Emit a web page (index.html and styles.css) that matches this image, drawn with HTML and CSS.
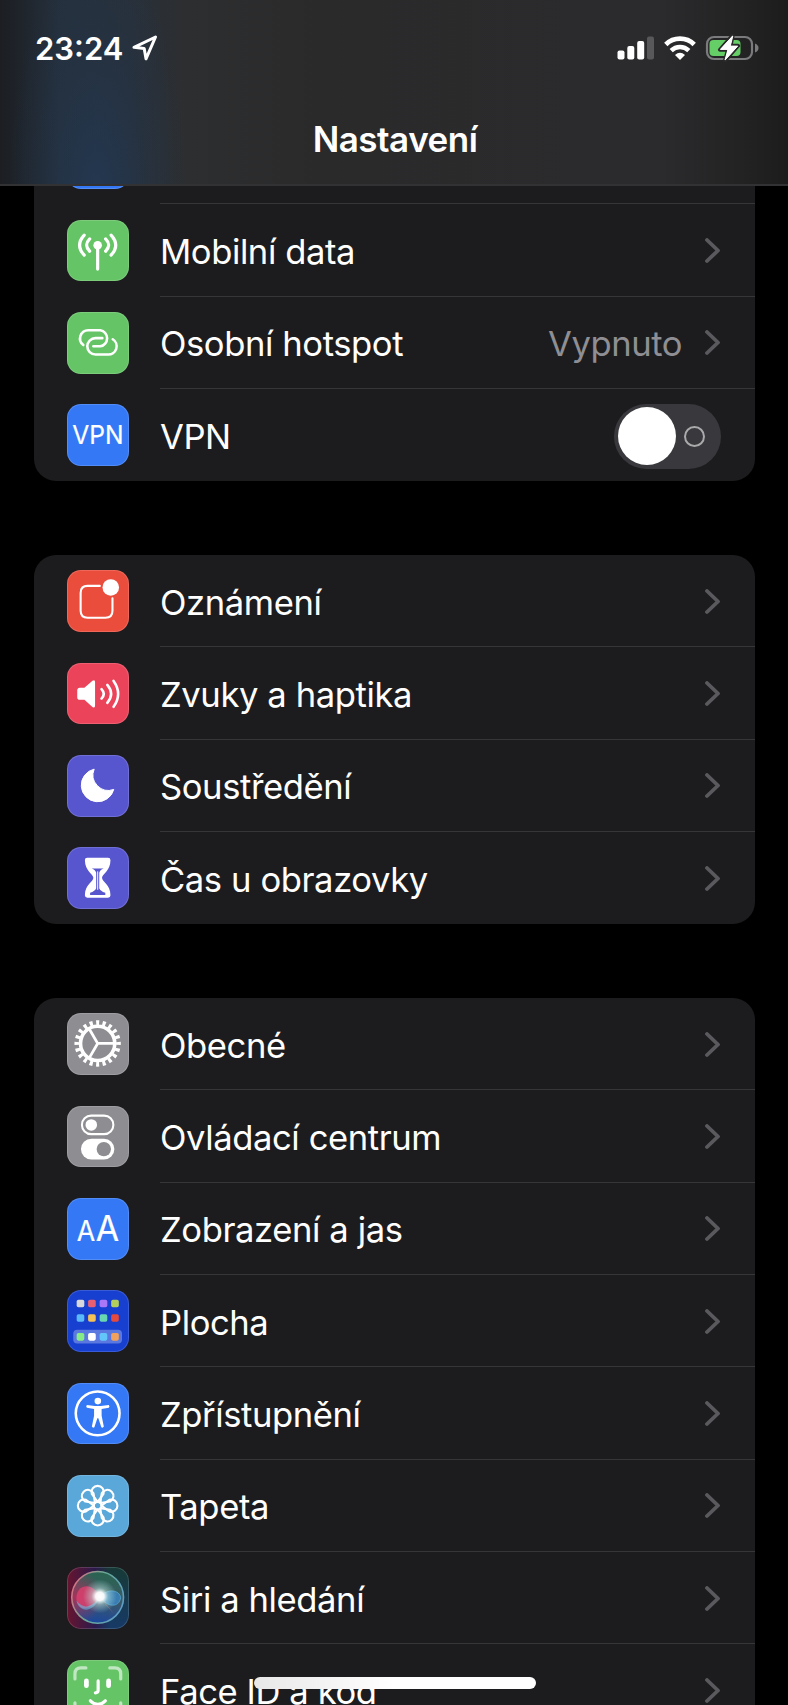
FILE: index.html
```
<!DOCTYPE html>
<html lang="cs">
<head>
    <meta charset="UTF-8">
    <meta name="viewport" content="width=device-width, initial-scale=1.0">
    <title>Nastavení</title>
    <link rel="stylesheet" href="styles.css">
</head>
<body>
    <svg width="0" height="0" class="defs">
        <symbol id="chevron" viewBox="0 0 16 26"><path d="M2 2 13 12.5 2 23" fill="none" stroke="currentColor" stroke-width="3.8" stroke-linecap="round" stroke-linejoin="round"/></symbol>
    </svg>

    <header class="header">
        <div class="status-bar">
            <span class="time">23:24</span>
            <svg class="location" width="26" height="26" viewBox="0 0 26 26"><path d="M2 12.3 23.5 2 14 23.8 12.2 13.6Z" fill="none" stroke="#fff" stroke-width="3" stroke-linejoin="round"/></svg>
            <svg class="signal" width="38" height="24" viewBox="0 0 38 24" fill="#fff">
                <rect x="0.5" y="14.5" width="7" height="9" rx="2"/>
                <rect x="10.3" y="10" width="7" height="13.5" rx="2"/>
                <rect x="20.2" y="5" width="7" height="18.5" rx="2"/>
                <rect x="30" y="0.5" width="7" height="23" rx="2" fill="#58585a"/>
            </svg>
            <svg class="wifi" width="32" height="24" viewBox="0 0 32 24" fill="none" stroke="#fff">
                <path d="M1.8 8.5A20.3 20.3 0 0 1 30.2 8.5" stroke-width="4.8"/>
                <path d="M7.2 14.6A12.5 12.5 0 0 1 24.8 14.6" stroke-width="4.4"/>
                <path d="M16 24 11 18.9Q16 14.7 21 18.9Z" fill="#fff" stroke="none"/>
            </svg>
            <svg class="battery" width="54" height="28" viewBox="0 0 54 28">
                <rect x="2" y="3" width="45" height="22" rx="7" fill="none" stroke="#7b7b7d" stroke-width="2.2"/>
                <path d="M50 9.5Q53.5 11 53.5 14T50 18.5Z" fill="#7b7b7d"/>
                <rect x="4.5" y="6" width="31" height="16" rx="4" fill="#66ce67"/>
                <path d="M27.8 1.2 15 15.8H23L20 26.6 33 11.8H25.5Z" fill="#fff" stroke="#29292a" stroke-width="4" stroke-linejoin="round" paint-order="stroke"/>
                <path d="M27.8 2 15.5 15.3H23L20 26 32.5 12.3H25.2Z" fill="#fff" stroke="#fff" stroke-width="1" stroke-linejoin="round"/>
            </svg>
        </div>
        <h1>Nastavení</h1>
    </header>

    <main class="settings">
        <section class="group">
            <div class="row">
                <span class="icon blue"></span>
                <div class="content"></div>
            </div>
            <div class="row">
                <svg class="icon green" viewBox="0 0 62 62">
                    <circle cx="30.8" cy="25.3" r="4.3" fill="#fff"/>
                    <g class="line w3"><path d="M30.8 26V49.3M22.8 19Q16.6 25.3 22.8 31.4M38.8 19Q45 25.3 38.8 31.4M17.3 15.2Q8 25.3 17.3 35.3M44.3 15.2Q53.6 25.3 44.3 35.3"/></g>
                </svg>
                <div class="content"><span class="label">Mobilní data</span><svg class="chevron"><use href="#chevron"/></svg></div>
            </div>
            <div class="row">
                <svg class="icon green" viewBox="0 0 62 62">
                    <g class="line w25"><path d="M16.4 33.2A8.3 8.3 0 0 1 21.3 18.3H33.4A8.2 8.2 0 0 1 33.4 34.5H26.5M46 27.4A8.3 8.3 0 0 1 41 42.7H28.6A8.2 8.2 0 0 1 28.6 26.3H35.5"/></g>
                </svg>
                <div class="content"><span class="label">Osobní hotspot</span><span class="value">Vypnuto</span><svg class="chevron"><use href="#chevron"/></svg></div>
            </div>
            <div class="row">
                <svg class="icon blue" viewBox="0 0 62 62"><text x="5.4" y="39.9" font-size="26" textLength="51.5" lengthAdjust="spacingAndGlyphs">VPN</text></svg>
                <div class="content"><span class="label">VPN</span><span class="switch"></span></div>
            </div>
        </section>

        <section class="group">
            <div class="row">
                <svg class="icon red" viewBox="0 0 62 62">
                    <path class="line w2" d="M33 16H20.7Q13.7 16 13.7 23V41Q13.7 48 20.7 48H38.7Q45.7 48 45.7 41V28.5"/>
                    <circle cx="44" cy="17.5" r="8.3" fill="#fff"/>
                </svg>
                <div class="content"><span class="label">Oznámení</span><svg class="chevron"><use href="#chevron"/></svg></div>
            </div>
            <div class="row">
                <svg class="icon pink" viewBox="0 0 62 62">
                    <path d="M13 24.8H17.5L25.6 17.8Q28.2 16.3 28.2 19.2V42.8Q28.2 45.7 25.6 44.2L17.5 37H13Q10.3 37 10.3 34.3V27.5Q10.3 24.8 13 24.8Z" fill="#fff"/>
                    <path class="line w25" d="M34.7 26.3Q39.2 31 34.7 35.8M40.5 22Q48.2 31 40.5 40M46.8 18Q56 31 46.8 44"/>
                </svg>
                <div class="content"><span class="label">Zvuky a haptika</span><svg class="chevron"><use href="#chevron"/></svg></div>
            </div>
            <div class="row">
                <svg class="icon purple" viewBox="0 0 62 62"><path d="M27.3 14.2A16.6 16.6 0 1 0 47 34.6 15.5 15.5 0 0 1 27.3 14.2Z" fill="#fff" stroke="#fff" stroke-linejoin="round"/></svg>
                <div class="content"><span class="label">Soustředění</span><svg class="chevron"><use href="#chevron"/></svg></div>
            </div>
            <div class="row">
                <svg class="icon purple" viewBox="0 0 62 62">
                    <path d="M20.5 10.7H41.2Q43.7 10.7 43.7 13.2C43.7 24 35.2 27 35.2 31S43.7 38 43.7 48.5Q43.7 51 41.2 51H20.5Q18 51 18 48.5C18 38 26.5 35 26.5 31S18 24 18 13.2Q18 10.7 20.5 10.7Z" fill="#fff"/>
                    <path d="M24.8 21.5H36.9Q33 23 32.4 26V41.5Q33.5 44.5 38.5 46V48.3H23.2V46Q28.2 44.5 29.3 41.5V26Q28.7 23 24.8 21.5Z" fill="#5856ce"/>
                    <path d="M30.85 24.5V43" stroke="#fff" stroke-width="1"/>
                </svg>
                <div class="content"><span class="label">Čas u obrazovky</span><svg class="chevron"><use href="#chevron"/></svg></div>
            </div>
        </section>

        <section class="group">
            <div class="row">
                <svg class="icon gray" viewBox="0 0 62 62" fill="none" stroke="#fff">
                    <circle cx="30.8" cy="30.6" r="17.2" stroke-width="3.6"/>
                    <circle cx="30.8" cy="30.6" r="20.9" stroke-width="4.8" pathLength="40" stroke-dasharray="0.95 1.05" stroke-dashoffset="0.47"/>
                    <path d="M47 30.6H30.8L22.7 16.6M30.8 30.6 22.7 44.6" stroke-width="2.8"/>
                </svg>
                <div class="content"><span class="label">Obecné</span><svg class="chevron"><use href="#chevron"/></svg></div>
            </div>
            <div class="row">
                <svg class="icon gray" viewBox="0 0 62 62">
                    <rect class="line w2" x="15" y="9.7" width="31.6" height="18.6" rx="9.3"/>
                    <circle cx="24.4" cy="19" r="5.8" fill="#fff"/>
                    <rect x="14" y="32.8" width="33.6" height="21" rx="10.5" fill="#fff"/>
                    <circle cx="37" cy="43.3" r="7.2" fill="#8e8d92"/>
                </svg>
                <div class="content"><span class="label">Ovládací centrum</span><svg class="chevron"><use href="#chevron"/></svg></div>
            </div>
            <div class="row">
                <svg class="icon blue" viewBox="0 0 62 62">
                    <text x="9.7" y="43.4" font-size="28" textLength="18.5" lengthAdjust="spacingAndGlyphs">A</text>
                    <text x="28.8" y="43.4" font-size="35" textLength="23.5" lengthAdjust="spacingAndGlyphs">A</text>
                </svg>
                <div class="content"><span class="label">Zobrazení a jas</span><svg class="chevron"><use href="#chevron"/></svg></div>
            </div>
            <div class="row">
                <svg class="icon navy" viewBox="0 0 62 62">
                    <rect x="6.3" y="40" width="49" height="13.8" rx="4" fill="#5b78e0"/>
                    <rect x="9.7" y="9.7" width="7.7" height="7.7" rx="1.8" fill="#d8d8dc"/>
                    <rect x="21.2" y="9.7" width="7.7" height="7.7" rx="1.8" fill="#e75f72"/>
                    <rect x="32.8" y="9.7" width="7.7" height="7.7" rx="1.8" fill="#a878f8"/>
                    <rect x="44.4" y="9.7" width="7.7" height="7.7" rx="1.8" fill="#b4d05c"/>
                    <rect x="9.7" y="24.3" width="7.7" height="7.7" rx="1.8" fill="#5ab9f9"/>
                    <rect x="21.2" y="24.3" width="7.7" height="7.7" rx="1.8" fill="#f5c255"/>
                    <rect x="32.8" y="24.3" width="7.7" height="7.7" rx="1.8" fill="#68d6b0"/>
                    <rect x="44.4" y="24.3" width="7.7" height="7.7" rx="1.8" fill="#e54a3c"/>
                    <rect x="9.7" y="43.2" width="7.7" height="7.7" rx="1.8" fill="#86ec86"/>
                    <rect x="21.2" y="43.2" width="7.7" height="7.7" rx="1.8" fill="#fff"/>
                    <rect x="32.8" y="43.2" width="7.7" height="7.7" rx="1.8" fill="#62c6fa"/>
                    <rect x="44.4" y="43.2" width="7.7" height="7.7" rx="1.8" fill="#f2a25c"/>
                </svg>
                <div class="content"><span class="label">Plocha</span><svg class="chevron"><use href="#chevron"/></svg></div>
            </div>
            <div class="row">
                <svg class="icon blue" viewBox="0 0 62 62">
                    <circle class="line w25" cx="30.8" cy="30.5" r="22"/>
                    <circle cx="31" cy="18.2" r="3.3" fill="#fff"/>
                    <path d="M20 22.2 28 23.2H34L42 22.2Q43.4 23.8 42 24.8L34.8 26.2V33L37 43.8Q36 45.6 34.5 44.4L31.5 35.5H30.5L27.5 44.4Q26 45.6 25 43.8L27.2 33V26.2L20 24.8Q18.6 23.8 20 22.2Z" fill="#fff"/>
                </svg>
                <div class="content"><span class="label">Zpřístupnění</span><svg class="chevron"><use href="#chevron"/></svg></div>
            </div>
            <div class="row">
                <svg class="icon sky" viewBox="0 0 62 62">
                    <defs><path id="petal" d="M30.8 27 24.9 19A6.2 6.2 0 1 1 36.7 19Z"/></defs>
                    <g class="line w2">
                        <use href="#petal"/>
                        <use href="#petal" transform="rotate(45 30.8 30.8)"/>
                        <use href="#petal" transform="rotate(90 30.8 30.8)"/>
                        <use href="#petal" transform="rotate(135 30.8 30.8)"/>
                        <use href="#petal" transform="rotate(180 30.8 30.8)"/>
                        <use href="#petal" transform="rotate(225 30.8 30.8)"/>
                        <use href="#petal" transform="rotate(270 30.8 30.8)"/>
                        <use href="#petal" transform="rotate(315 30.8 30.8)"/>
                        <circle cx="30.8" cy="30.8" r="3.8"/>
                    </g>
                </svg>
                <div class="content"><span class="label">Tapeta</span><svg class="chevron"><use href="#chevron"/></svg></div>
            </div>
            <div class="row">
                <svg class="icon siri" viewBox="0 0 62 62">
                    <defs>
                        <linearGradient id="orb" x1="0.6" y1="0" x2="0.45" y2="1"><stop offset="0" stop-color="#28644f"/><stop offset="0.5" stop-color="#3c5a66"/><stop offset="1" stop-color="#1c479c"/></linearGradient>
                        <radialGradient id="warm" cx="0.05" cy="0.5" r="0.55"><stop offset="0" stop-color="#b02f58" stop-opacity="0.9"/><stop offset="1" stop-color="#b02f58" stop-opacity="0"/></radialGradient>
                        <linearGradient id="rim" x1="0" y1="0.3" x2="1" y2="0.7"><stop offset="0" stop-color="#d87084"/><stop offset="0.45" stop-color="#68a894"/><stop offset="1" stop-color="#5e9cc8"/></linearGradient>
                        <radialGradient id="glow"><stop offset="0" stop-color="#fff"/><stop offset="0.25" stop-color="#fff" stop-opacity="0.95"/><stop offset="0.5" stop-color="#c8f0e8" stop-opacity="0.45"/><stop offset="1" stop-color="#b0e8e0" stop-opacity="0"/></radialGradient>
                    </defs>
                    <circle cx="30.8" cy="30.5" r="26" fill="url(#orb)"/>
                    <circle cx="30.8" cy="30.5" r="26" fill="url(#warm)" stroke="url(#rim)" stroke-width="1.6"/>
                    <path d="M33 30C25 13 8 18 9.5 33C12 47 27 42 33 30Z" fill="#e0406f" opacity="0.8"/>
                    <path d="M33 30C27 47 12 46 9.5 34C18 45 27 38 33 30Z" fill="#67b7df" opacity="0.6"/>
                    <path d="M33 30C41 21 53 23 54 31C52 41 41 41 33 30Z" fill="#3a86c4" fill-opacity="0.8" stroke="#55a7d0" stroke-width="0.8"/>
                    <path d="M34 31 48 48 39 38Z" fill="#a77083" opacity="0.8"/>
                    <circle cx="33" cy="29.5" r="17" fill="url(#glow)"/>
                </svg>
                <div class="content"><span class="label">Siri a hledání</span><svg class="chevron"><use href="#chevron"/></svg></div>
            </div>
            <div class="row">
                <svg class="icon green" viewBox="0 0 62 62">
                    <path class="line w3" opacity="0.6" d="M8 19V14Q8 8 14 8H19M43 8H48Q54 8 54 14V19M8 43V48Q8 54 14 54H19M43 54H48Q54 54 54 48V43"/>
                    <path class="line w4" d="M19.5 21V25.8M41.8 21V25.8"/>
                    <path class="line w3" d="M31.3 21V30.5Q31.3 33 28.5 33M23.5 41Q31 48.5 38.5 41"/>
                </svg>
                <div class="content"><span class="label">Face ID a kód</span><svg class="chevron"><use href="#chevron"/></svg></div>
            </div>
        </section>
    </main>

    <div class="home-indicator"></div>
</body>
</html>
```

FILE: styles.css
```
* { box-sizing: border-box; }
body { margin: 0; height: 1705px; overflow: hidden; background: #000; color: #fff; font-family: Inter, "Liberation Sans", sans-serif; }
.defs { display: none; }

.header {
    position: fixed; top: 0; left: 0; right: 0; z-index: 2; height: 186px;
    background:
        radial-gradient(ellipse 90px 260px at 97px 200px, rgba(34,58,88,0.75), rgba(34,54,80,0.3) 55%, transparent),
        linear-gradient(90deg, #1c1e22 0, #25303c 60px, #28303a 130px, #2d2e2f 190px, #2a2a2b 320px, #2b2b2d 660px, #232324 740px, #1c1c1d 788px);
    border-bottom: 2px solid #323234;
}
.status-bar { display: flex; align-items: center; height: 96px; padding: 0 29px 0 35px; }
.time { font-size: 31px; font-weight: 600; letter-spacing: 0; }
.location { margin-left: 9px; }
.signal { margin-left: auto; }
.wifi { margin-left: 9px; }
.battery { margin-left: 9px; }
h1 { margin: 23px 0 0 2px; font-size: 35px; line-height: 40px; font-weight: 600; letter-spacing: -0.5px; text-align: center; }

.settings { height: 1705px; overflow: hidden; padding: 112px 33.3px 0 33.7px; }
.group { background: #1c1c1e; border-radius: 22px; margin-bottom: 73.7px; overflow: hidden; }
.row { display: flex; align-items: stretch; height: 92.33px; padding-left: 33.3px; }
.icon { width: 61.7px; height: 61.7px; flex: none; align-self: center; border-radius: 14px; box-shadow: inset 0 0 0 1px rgba(255,255,255,0.15); }
.icon text { fill: #fff; stroke: #fff; stroke-width: 0.2; }
.content { flex: 1; display: flex; align-items: center; margin-left: 31.3px; padding: 2px 33.5px 0 0; border-bottom: 1.4px solid #363638; }
.row:last-child .content { border-bottom: none; }
.label, .value { font-size: 34.6px; line-height: 44px; letter-spacing: -0.4px; }
.value { margin-left: auto; color: #8e8e93; }
.chevron { width: 16px; height: 26px; margin-left: auto; color: #5a5a5e; }
.value + .chevron { margin-left: 23px; }

.switch { position: relative; width: 107px; height: 65px; margin-left: auto; border-radius: 33px; background: #39393d; }
.switch::before { content: ""; position: absolute; left: 3.5px; top: 3.5px; width: 58px; height: 58px; border-radius: 50%; background: #fff; }
.switch::after { content: ""; position: absolute; left: 70px; top: 22.5px; width: 17.2px; height: 17.2px; border-radius: 50%; border: 2.4px solid #aaaaac; }

.green { background: #65c466; }
.blue { background: #3478f6; }
.red { background: #eb4d3d; }
.pink { background: #eb445a; }
.purple { background: #5856ce; }
.gray { background: #8e8d92; }
.navy { background: #173fd0; }
.sky { background: #5aa8da; }
.siri { background: linear-gradient(90deg, #68152f, #2c1a4c 45%, transparent 70%), linear-gradient(#173a36, #163a66); }

.line { fill: none; stroke: #fff; stroke-linecap: round; stroke-linejoin: round; }
.w2 { stroke-width: 2.1; }
.w25 { stroke-width: 2.6; }
.w3 { stroke-width: 3.2; }
.w4 { stroke-width: 4.8; }

.home-indicator { position: fixed; left: 253.5px; bottom: 16.5px; z-index: 3; width: 282px; height: 11.5px; border-radius: 6px; background: linear-gradient(90deg, #e8e8e9, #fff 50%); }
```
